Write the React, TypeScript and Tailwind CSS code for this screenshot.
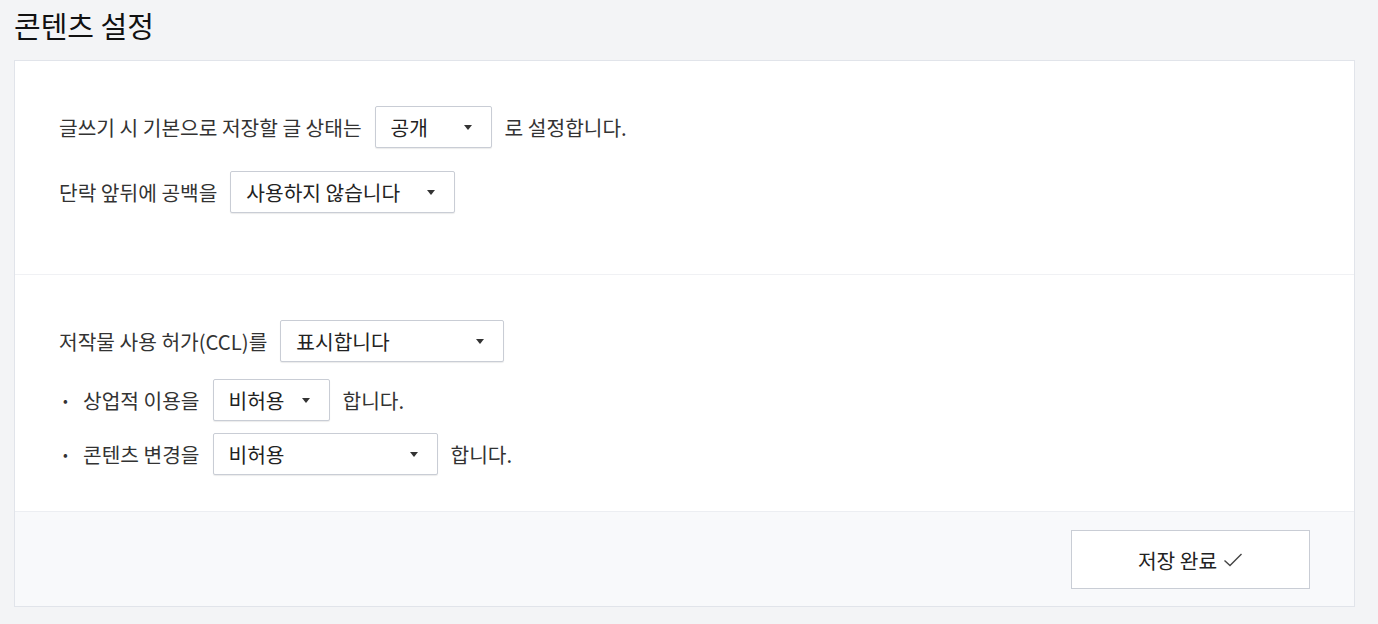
import React from 'react';

const font = { fontFamily: '"Noto Sans CJK KR", "Noto Sans", sans-serif' };

function Select({ value, width }: { value: string; width: string }) {
  return (
    <div
      className={`${width} h-[42px] flex items-center justify-between pl-[15px] pr-[19px] bg-white border border-[#c9cdd5] rounded-[2px] shadow-[0_1px_1px_rgba(0,0,0,0.08)] text-[#222]`}
    >
      <span>{value}</span>
      <span className="w-0 h-0 border-l-[4px] border-r-[4px] border-t-[5px] border-l-transparent border-r-transparent border-t-[#333]" />
    </div>
  );
}

export default function App() {
  return (
    <div style={font} className="min-h-screen bg-[#f3f4f6] pl-[14px] pr-[23px] pt-[4px] pb-4 text-[20.3px] leading-[28px] text-[#333]">
      <h1 className="text-[29px] leading-[42px] text-[#111] mb-[14px]">콘텐츠 설정</h1>

      <div className="bg-white border border-[#e1e4ea]">
        <div className="pl-[44px] pt-[45px] pb-[61px] border-b border-[#f0f1f4] flex flex-col gap-[23px]">
          <div className="flex items-center gap-[13px]">
            <span>글쓰기 시 기본으로 저장할 글 상태는</span>
            <Select value="공개" width="w-[117px]" />
            <span>로 설정합니다.</span>
          </div>
          <div className="flex items-center gap-[13px]">
            <span>단락 앞뒤에 공백을</span>
            <Select value="사용하지 않습니다" width="w-[225px]" />
          </div>
        </div>

        <div className="pl-[44px] pt-[45px] pb-[36px] flex flex-col">
          <div className="flex items-center gap-[13px]">
            <span>저작물 사용 허가(CCL)를</span>
            <Select value="표시합니다" width="w-[224px]" />
          </div>
          <ul className="mt-[17px] flex flex-col gap-3">
            <li className="flex items-center">
              <span className="w-[24px] pl-[4px] text-[14px]">•</span>
              <span className="mr-[13px]">상업적 이용을</span>
              <Select value="비허용" width="w-[117px]" />
              <span className="ml-[13px]">합니다.</span>
            </li>
            <li className="flex items-center">
              <span className="w-[24px] pl-[4px] text-[14px]">•</span>
              <span className="mr-[13px]">콘텐츠 변경을</span>
              <Select value="비허용" width="w-[225px]" />
              <span className="ml-[13px]">합니다.</span>
            </li>
          </ul>
        </div>

        <div className="bg-[#f8f9fb] border-t border-[#eceef2] flex justify-end pr-[44px] pt-[18px] pb-[17px]">
          <button className="w-[239px] h-[59px] bg-white border border-[#c9cdd5] flex items-center justify-center gap-[6px] text-[#222]">
            <span>저장 완료</span>
            <svg width="20" height="16" viewBox="0 0 20 16" fill="none">
              <path d="M1.5 8.5 L7 13.5 L18.5 2" stroke="#444" strokeWidth="1.4" />
            </svg>
          </button>
        </div>
      </div>
    </div>
  );
}
